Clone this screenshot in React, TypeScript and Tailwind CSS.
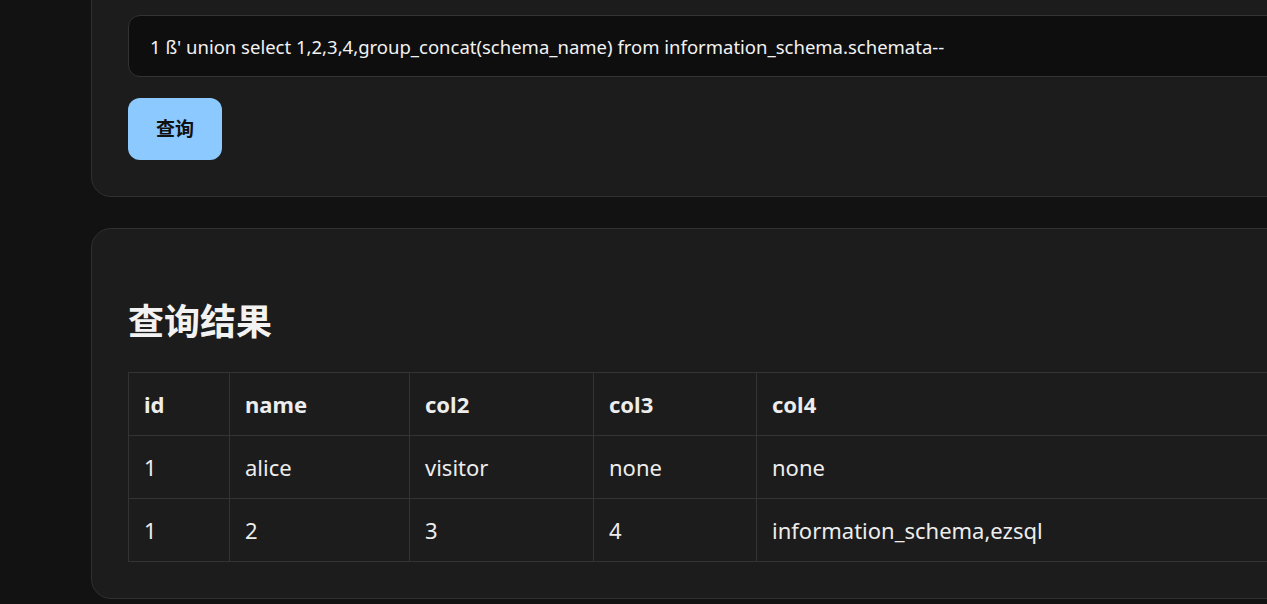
import React from 'react';

const rows = [
  ['1', 'alice', 'visitor', 'none', 'none'],
  ['1', '2', '3', '4', 'information_schema,ezsql'],
];

const columns = ['id', 'name', 'col2', 'col3', 'col4'];
const widths = ['w-[101px]', 'w-[180px]', 'w-[184px]', 'w-[163px]', ''];

export default function App() {
  return (
    <div
      className="h-[604px] w-full overflow-hidden bg-[#121212] text-[#ededed]"
      style={{ fontFamily: '"Noto Sans", "Noto Sans CJK SC", sans-serif' }}
    >
      <div className="ml-[91px] -mt-[40px] flex w-[1320px] flex-col gap-[31px]">
        {/* query form */}
        <section className="rounded-[20px] border border-[#303030] bg-[#1c1c1c] px-9 pb-9 pt-[54px]">
          <input
            readOnly
            value="1 ß' union select 1,2,3,4,group_concat(schema_name) from information_schema.schemata--"
            className="h-[62px] w-full rounded-xl border border-[#333] bg-[#0e0e0e] px-[21px] text-[18.5px] text-[#f2f2f2] outline-none"
          />
          <button className="mt-[21px] flex h-[62px] w-[94px] items-center justify-center rounded-xl bg-[#8cc9ff] text-[19px] font-bold text-[#111]">
            查询
          </button>
        </section>

        {/* results */}
        <section className="rounded-[20px] border border-[#303030] bg-[#1c1c1c] px-9 pb-9 pt-9">
          <h2 className="mt-[35px] mb-[29px] text-[36px] font-bold leading-[43px] text-[#f2f2f2]">查询结果</h2>
          <table className="w-full border-collapse text-[22px]">
            <thead>
              <tr>
                {columns.map((c, i) => (
                  <th
                    key={c}
                    className={`h-[63px] border border-[#333] pl-[15px] pr-4 text-left font-bold ${widths[i]}`}
                  >
                    {c}
                  </th>
                ))}
              </tr>
            </thead>
            <tbody>
              {rows.map((r, ri) => (
                <tr key={ri}>
                  {r.map((v, ci) => (
                    <td key={ci} className="h-[63px] border border-[#333] pl-[15px] pr-4">
                      {v}
                    </td>
                  ))}
                </tr>
              ))}
            </tbody>
          </table>
        </section>
      </div>
    </div>
  );
}
